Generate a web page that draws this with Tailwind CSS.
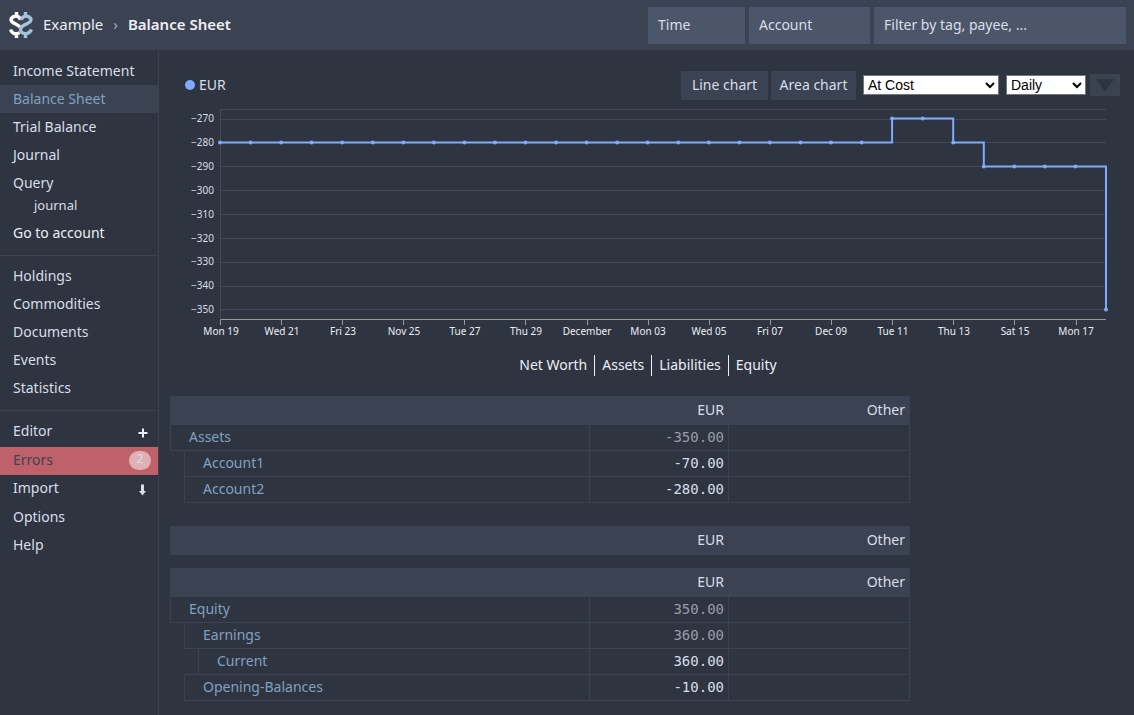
<!DOCTYPE html>
<html lang="en">
<head>
<meta charset="utf-8">
<meta name="viewport" content="width=device-width, initial-scale=1">
<title>Balance Sheet - Example</title>
<script src="https://cdn.jsdelivr.net/npm/@tailwindcss/browser@4"></script>
</head>
<body class="flex min-h-screen flex-col bg-[#2e3440] font-['Noto_Sans','Open_Sans',sans-serif] text-[14px] leading-5 text-[#d8dee9]">
<header class="flex h-[50px] items-center bg-[#3b4252] pr-2 pl-[9px] text-[#eceff4]">
  <svg class="h-[26px] w-6 shrink-0" viewBox="0 0 24 26" fill="none" stroke-width="3.400" aria-hidden="true">
    <g stroke="#fff">
      <path d="M11.500 8C11 5 8 3.800 6 4.200C2.500 4.800 1 7.500 3 9.800C5 11.800 8 12 11 15M1.500 17.500C3 22 7.500 22.800 10.500 20.500M7.500 0V4M7.500 22V26"/>
    </g>
    <g stroke="#a3c3d9">
      <path d="M12.500 8C13 5 16 3.800 18 4.200C21.500 4.800 23 7.500 21 9.800C19 12.300 11.500 13 11.500 17.500C11.500 22.500 20 23.500 22.500 17.500M16.500 0V4M16.500 22V26"/>
    </g>
  </svg>
  <h1 class="ml-[10px] flex pb-[2px] text-[15px] whitespace-nowrap">
    <a href="#">Example</a><span class="mx-[10px] text-[#a5abb8]">›</span><strong class="font-semibold">Balance Sheet</strong>
  </h1>
  <form class="ml-auto flex gap-1">
    <input aria-label="Time" placeholder="Time" class="h-[37px] w-[97px] bg-[#4c566a] px-[10px] pb-[2px] placeholder:text-[#d8dee9]">
    <input aria-label="Account" placeholder="Account" class="h-[37px] w-[121px] bg-[#4c566a] px-[10px] pb-[2px] placeholder:text-[#d8dee9]">
    <input aria-label="Filter" placeholder="Filter by tag, payee, ..." class="h-[37px] w-[252px] bg-[#4c566a] px-[10px] pb-[2px] placeholder:text-[#d8dee9]">
  </form>
</header>
<div class="flex flex-1">
  <aside class="w-[159px] shrink-0 border-r border-[#3b4252]">
    <nav>
      <ul class="border-b border-[#3b4252] pt-[7px] pb-2">
        <li><a href="#" class="block px-[13px] py-1">Income Statement</a></li>
        <li><a href="#" class="block bg-[#3b4252] px-[13px] py-1 text-[#81a1c1]">Balance Sheet</a></li>
        <li><a href="#" class="block px-[13px] py-1">Trial Balance</a></li>
        <li><a href="#" class="block px-[13px] py-1">Journal</a></li>
        <li><a href="#" class="block px-[13px] py-1">Query</a>
          <a href="#" class="block h-[22px] pl-[34px] text-[13px] leading-4">journal</a></li>
        <li><button type="button" class="block px-[13px] py-1 text-[#eceff4]">Go to account</button></li>
      </ul>
      <ul class="border-b border-[#3b4252] pt-[6px] pb-2">
        <li><a href="#" class="block px-[13px] py-1">Holdings</a></li>
        <li><a href="#" class="block px-[13px] py-1">Commodities</a></li>
        <li><a href="#" class="block px-[13px] py-1">Documents</a></li>
        <li><a href="#" class="block px-[13px] py-1">Events</a></li>
        <li><a href="#" class="block px-[13px] py-1">Statistics</a></li>
      </ul>
      <ul class="pt-[6px]">
        <li class="flex h-[30px] items-start justify-between"><a href="#" class="px-[13px] py-1">Editor</a>
          <button type="button" aria-label="Add entry" class="pt-[11px] pr-[10px]"><svg class="size-[10px]" viewBox="0 0 10 10" stroke="#eceff4" stroke-width="2"><path d="M5 0.500V9.500M0.500 5H9.500"/></svg></button></li>
        <li><a href="#" class="flex h-7 items-center justify-between bg-[#bf616a] pr-[7px] pb-[2px] pl-[13px] text-[#3b4252]">Errors
          <span class="flex h-[19px] w-[22px] items-center justify-center rounded-[10px] bg-white/50 pb-[2px] text-[12px] text-[#d8dee9]">2</span></a></li>
        <li class="flex h-7 items-start justify-between"><a href="#" class="px-[13px] py-[3px]">Import</a>
          <button type="button" aria-label="Download" class="pt-[9px] pr-[12px]"><svg class="h-[12px] w-[7px]" viewBox="0 0 7 12" fill="#d8dee9"><path d="M2 0.500H5V7H7L3.500 11.500L0 7H2Z"/></svg></button></li>
        <li><a href="#" class="block px-[13px] py-1">Options</a></li>
        <li><a href="#" class="block px-[13px] py-1">Help</a></li>
      </ul>
    </nav>
  </aside>
  <main class="min-w-0 flex-1 pt-[21px] pr-[14px] pl-[11px]">
    <div class="flex h-[29px] items-center">
      <button type="button" class="mb-px ml-[15px] flex items-center gap-1"><span class="size-[10px] rounded-full bg-[#7eabff]"></span>EUR</button>
      <div class="ml-auto flex items-center">
        <button type="button" class="h-[29px] w-[87px] bg-[#3b4252] pb-[2px]">Line chart</button>
        <button type="button" class="ml-[3px] h-[29px] w-[85px] bg-[#3b4252] pb-[2px]">Area chart</button>
        <select aria-label="Conversion" class="mb-px ml-[7px] h-5 w-[136px] border border-[#767676] bg-white font-['Liberation_Sans',sans-serif] text-black"><option>At Cost</option><option>At Market Value</option></select>
        <select aria-label="Interval" class="mb-px ml-[7px] h-5 w-[80px] border border-[#767676] bg-white font-['Liberation_Sans',sans-serif] text-black"><option>Daily</option><option>Monthly</option></select>
        <button type="button" aria-label="Toggle chart" class="mb-px ml-1 flex h-[22px] w-[30px] items-center justify-center bg-[#3b4252]"><svg class="h-[13px] w-[18px]" viewBox="0 0 18 13" fill="#2e3440"><path d="M0 0H18L9 13Z"/></svg></button>
      </div>
    </div>
    <svg class="block w-full" viewBox="0 0 950 242" fill="none" role="img" aria-label="Balance in EUR">
      <defs><marker id="dot" class="overflow-visible" markerUnits="userSpaceOnUse" markerWidth="4" markerHeight="4"><circle r="2" fill="#7eabff"/></marker></defs>
      <path stroke="#444852" d="M936 9.500H50.500V219M50 19.500H936M50 42.500H936M50 66.500H936M50 90.500H936M50 114.500H936M50 138.500H936M50 162.500H936M50 186.500H936M50 209.500H936"/>
      <path stroke="#999" d="M936 219.500H50.500V225M111.500 219V225M172.500 219V225M233.500 219V225M294.500 219V225M355.500 219V225M417.500 219V225M478.500 219V225M539.500 219V225M600.500 219V225M661.500 219V225M722.500 219V225M783.500 219V225M844.500 219V225M906.500 219V225"/>
      <g fill="#d8dee9" font-size="10" text-anchor="end">
        <text x="44" y="22">−270</text><text x="44" y="46">−280</text><text x="44" y="70">−290</text><text x="44" y="94">−300</text><text x="44" y="118">−310</text><text x="44" y="142">−320</text><text x="44" y="165">−330</text><text x="44" y="189">−340</text><text x="44" y="213">−350</text>
      </g>
      <g fill="#eceff4" font-size="10" text-anchor="middle">
        <text x="51" y="235">Mon 19</text><text x="112" y="235">Wed 21</text><text x="173" y="235">Fri 23</text><text x="234" y="235">Nov 25</text><text x="295" y="235">Tue 27</text><text x="356" y="235">Thu 29</text><text x="417" y="235">December</text><text x="478" y="235">Mon 03</text><text x="539" y="235">Wed 05</text><text x="600" y="235">Fri 07</text><text x="661" y="235">Dec 09</text><text x="723" y="235">Tue 11</text><text x="784" y="235">Thu 13</text><text x="845" y="235">Sat 15</text><text x="906" y="235">Mon 17</text>
      </g>
      <path stroke="#7eabff" stroke-width="2" d="M50 42.500H722.100V18.500H783.200V42.500H813.800V66.500H936V209.500"/>
      <polyline marker-start="url(#dot)" marker-mid="url(#dot)" marker-end="url(#dot)" points="50,42.500 80.600,42.500 111.100,42.500 141.700,42.500 172.200,42.500 202.800,42.500 233.300,42.500 263.900,42.500 294.400,42.500 325,42.500 355.500,42.500 386.100,42.500 416.600,42.500 447.200,42.500 477.700,42.500 508.300,42.500 538.800,42.500 569.400,42.500 599.900,42.500 630.500,42.500 661,42.500 691.600,42.500 722.100,18.500 752.700,18.500 783.200,42.500 813.800,66.500 844.300,66.500 874.900,66.500 905.400,66.500 936,209.500"/>
    </svg>
    <div class="mt-[13px] flex justify-center divide-x divide-[#eceff4] pl-[6px] text-[#eceff4]">
      <button type="button" class="h-[21px] px-[7px] pb-[2px]">Net Worth</button>
      <button type="button" class="h-[21px] px-[7px] pb-[2px]">Assets</button>
      <button type="button" class="h-[21px] px-[7px] pb-[2px]">Liabilities</button>
      <button type="button" class="h-[21px] px-[7px] pb-[2px]">Equity</button>
    </div>
    <div class="mt-5 max-w-[740px] pb-[14px]">
      <table class="w-full table-fixed border-separate border-spacing-0 text-right">
        <colgroup><col><col class="w-[139px]"><col class="w-[181px]"></colgroup>
        <thead class="h-[29px] bg-[#3b4252]"><tr><th aria-label="Account"></th><th class="pr-[5px] pb-[2px] font-normal">EUR</th><th class="pr-[5px] pb-[2px] font-normal">Other</th></tr></thead>
        <tbody class="font-['DejaVu_Sans_Mono',monospace]">
          <tr class="h-[26px]"><td class="p-0 text-left font-['Noto_Sans',sans-serif]"><div class="h-[26px] border-x border-b border-[#3b4252] pt-[2px] pl-[18px] text-[#81a1c1]"><a href="#">Assets</a></div></td><td class="border-r border-b border-[#3b4252] pr-1 pb-[2px] text-[#999da5]">-350.00</td><td class="border-r border-b border-[#3b4252]"></td></tr>
          <tr class="h-[26px]"><td class="p-0 pl-[14px] text-left font-['Noto_Sans',sans-serif]"><div class="h-[26px] border-x border-b border-[#3b4252] pt-[2px] pl-[18px] text-[#81a1c1]"><a href="#">Account1</a></div></td><td class="border-r border-b border-[#3b4252] pr-1 pb-[2px]">-70.00</td><td class="border-r border-b border-[#3b4252]"></td></tr>
          <tr class="h-[26px]"><td class="p-0 pl-[14px] text-left font-['Noto_Sans',sans-serif]"><div class="h-[26px] border-x border-b border-[#3b4252] pt-[2px] pl-[18px] text-[#81a1c1]"><a href="#">Account2</a></div></td><td class="border-r border-b border-[#3b4252] pr-1 pb-[2px]">-280.00</td><td class="border-r border-b border-[#3b4252]"></td></tr>
        </tbody>
      </table>
      <table class="mt-[23px] w-full table-fixed border-separate border-spacing-0 text-right">
        <colgroup><col><col class="w-[139px]"><col class="w-[181px]"></colgroup>
        <thead class="h-[29px] bg-[#3b4252]"><tr><th aria-label="Account"></th><th class="pr-[5px] pb-[2px] font-normal">EUR</th><th class="pr-[5px] pb-[2px] font-normal">Other</th></tr></thead>
      </table>
      <table class="mt-[13px] w-full table-fixed border-separate border-spacing-0 text-right">
        <colgroup><col><col class="w-[139px]"><col class="w-[181px]"></colgroup>
        <thead class="h-[29px] bg-[#3b4252]"><tr><th aria-label="Account"></th><th class="pr-[5px] pb-[2px] font-normal">EUR</th><th class="pr-[5px] pb-[2px] font-normal">Other</th></tr></thead>
        <tbody class="font-['DejaVu_Sans_Mono',monospace]">
          <tr class="h-[26px]"><td class="p-0 text-left font-['Noto_Sans',sans-serif]"><div class="h-[26px] border-x border-b border-[#3b4252] pt-[2px] pl-[18px] text-[#81a1c1]"><a href="#">Equity</a></div></td><td class="border-r border-b border-[#3b4252] pr-1 pb-[2px] text-[#999da5]">350.00</td><td class="border-r border-b border-[#3b4252]"></td></tr>
          <tr class="h-[26px]"><td class="p-0 pl-[14px] text-left font-['Noto_Sans',sans-serif]"><div class="h-[26px] border-x border-b border-[#3b4252] pt-[2px] pl-[18px] text-[#81a1c1]"><a href="#">Earnings</a></div></td><td class="border-r border-b border-[#3b4252] pr-1 pb-[2px] text-[#999da5]">360.00</td><td class="border-r border-b border-[#3b4252]"></td></tr>
          <tr class="h-[26px]"><td class="p-0 pl-[14px] text-left font-['Noto_Sans',sans-serif]"><div class="h-[26px] border-b border-[#3b4252] pl-[14px]"><div class="h-[25px] border-x border-[#3b4252] pt-[2px] pl-[18px] text-[#81a1c1]"><a href="#">Current</a></div></div></td><td class="border-r border-b border-[#3b4252] pr-1 pb-[2px]">360.00</td><td class="border-r border-b border-[#3b4252]"></td></tr>
          <tr class="h-[26px]"><td class="p-0 pl-[14px] text-left font-['Noto_Sans',sans-serif]"><div class="h-[26px] border-x border-b border-[#3b4252] pt-[2px] pl-[18px] text-[#81a1c1]"><a href="#">Opening-Balances</a></div></td><td class="border-r border-b border-[#3b4252] pr-1 pb-[2px]">-10.00</td><td class="border-r border-b border-[#3b4252]"></td></tr>
        </tbody>
      </table>
    </div>
  </main>
</div>
</body>
</html>
